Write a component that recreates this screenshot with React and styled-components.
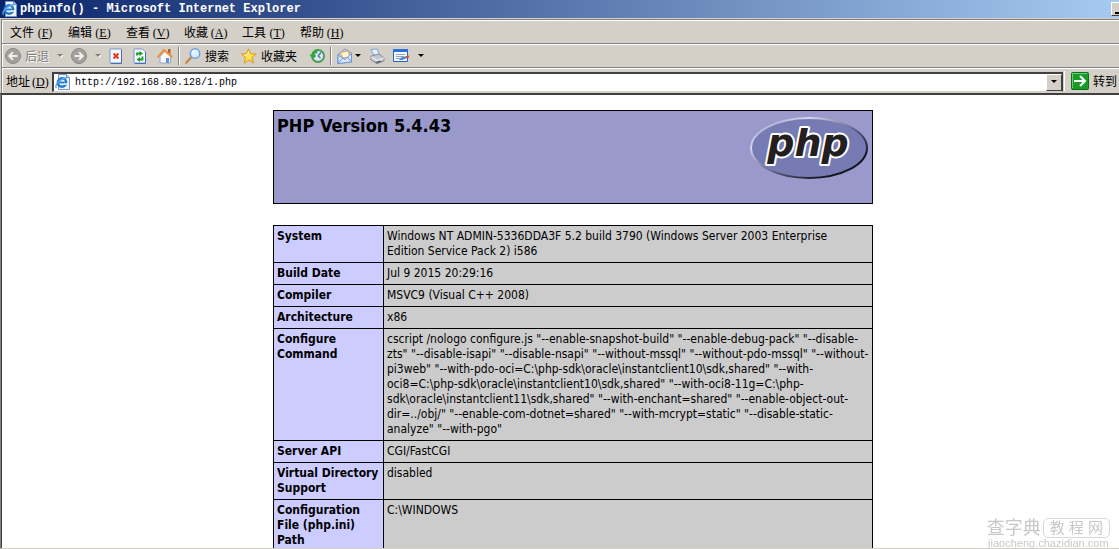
import styled, { createGlobalStyle } from "styled-components";

const GlobalStyle = createGlobalStyle`
  * {
    box-sizing: border-box;
  }

  body {
    margin: 0;
    background-color: #fff;
    color: #000;
    font-family: "Liberation Sans", "Noto Sans CJK SC", sans-serif;
    font-size: 12px;
  }
`;

const Window = styled.div`
  display: flex;
  flex-direction: column;
  height: 100vh;
  overflow: hidden;
`;

const TitleBar = styled.header`
  display: flex;
  align-items: center;
  gap: 2px;
  height: 18px;
  padding-left: 2px;
  flex-shrink: 0;
  background: linear-gradient(to right, #0a246a, #a6caf0);
`;

const Title = styled.h1`
  flex: 1;
  margin: 0;
  color: #fff;
  font-family: "Liberation Mono", monospace;
  font-size: 12px;
  line-height: 18px;
  white-space: nowrap;
`;

const MinimizeButton = styled.button`
  width: 8px;
  height: 14px;
  padding: 0;
  border: 1px solid #fff;
  border-right: none;
  border-bottom-color: #404040;
  background-color: #d4d0c8;
  display: flex;
  align-items: flex-end;
  justify-content: flex-end;

  &::after {
    content: "";
    width: 4px;
    height: 2px;
    margin-bottom: 1px;
    background-color: #000;
  }
`;

const Chrome = styled.div`
  flex-shrink: 0;
  padding-top: 1px;
  padding-left: 1px;
  background-color: #d4d0c8;
`;

const Bar = styled.div`
  display: flex;
  align-items: center;
  height: ${(props) => props.$height}px;
  border-top: 1px solid #808080;
  border-left: 1px solid #808080;
  box-shadow: inset 1px 1px 0 #fff;
  white-space: nowrap;
`;

const MenuBar = styled(Bar)`
  gap: 14px;
  padding-left: 8px;
`;

const AddressBar = styled(Bar)`
  padding-left: 4px;
`;

const PlainButton = styled.button`
  display: flex;
  align-items: center;
  gap: ${(props) => props.$gap || 2}px;
  margin: 0;
  padding: 0;
  border: none;
  background: none;
  color: ${(props) => (props.$muted ? "#808080" : "#000")};
  font-family: "Noto Sans CJK SC", sans-serif;
  font-size: 12px;
  line-height: 18px;
  text-shadow: ${(props) => (props.$muted ? "1px 1px 0 #fff" : "none")};
`;

const Key = styled.span`
  display: inline-block;
  width: 18px;
  margin-left: 2px;
  font-family: "Liberation Serif", serif;
  font-size: 12px;
  line-height: 16px;
`;

const Toolbar = styled(Bar)`
  padding-left: 3px;
  gap: 5px;
`;

const Group = styled.div`
  display: flex;
  align-items: center;
  gap: ${(props) => props.$gap}px;
`;

const Separator = styled.span`
  width: 2px;
  height: 18px;
  border-left: 1px solid #808080;
  border-right: 1px solid #fff;
`;

const AddressLabel = styled.label`
  width: 46px;
  font-family: "Noto Sans CJK SC", sans-serif;
`;

const AddressBox = styled.div`
  flex: 1;
  display: flex;
  align-items: center;
  height: 20px;
  margin-top: 2px;
  padding-left: 1px;
  border: 1px solid #404040;
  border-width: 2px 1px 1px 2px;
  border-bottom-color: #d4d0c8;
  background-color: #fff;
`;

const AddressInput = styled.input`
  flex: 1;
  min-width: 0;
  height: 16px;
  margin-left: 4px;
  padding: 0;
  border: none;
  outline: none;
  background: none;
  font-family: "Liberation Mono", monospace;
  font-size: 10px;
`;

const DropButton = styled.button`
  display: flex;
  align-items: center;
  justify-content: center;
  width: 16px;
  height: 17px;
  padding: 0;
  border: 1px solid #fff;
  border-right-color: #404040;
  border-bottom-color: #404040;
  background-color: #d4d0c8;
`;

const GoButton = styled(PlainButton)`
  height: 20px;
  margin-left: 1px;
  padding-left: 6px;
  padding-right: 2px;
  border-left: 1px solid #fff;
`;

const Viewport = styled.main`
  flex: 1;
  min-height: 0;
  overflow: hidden;
  border-top: 2px solid #404040;
  border-left: 1px solid #808080;
  border-bottom: 1px solid #d4d0c8;
  box-shadow: inset 1px 0 0 #404040;
`;

/* the document is wider than the visible part of the window */
const Page = styled.div`
  width: calc(100% + 26px);
  padding-top: 15px;
  font-family: "DejaVu Sans Condensed", "DejaVu Sans", sans-serif;
  font-size: 12px;
  line-height: 15px;
`;

const Banner = styled.section`
  display: flex;
  justify-content: space-between;
  width: 600px;
  height: 94px;
  margin: 0 auto 21px;
  padding: 4px 3px;
  border: 1px solid #000;
  background-color: #9999cc;
`;

const Version = styled.h2`
  margin: 0;
  font-size: 18px;
  line-height: 22px;
`;

const InfoTable = styled.table`
  width: 600px;
  margin: 0 auto;
  border-collapse: collapse;
  table-layout: fixed;
`;

const Name = styled.th`
  width: 110px;
  padding: 3px;
  border: 1px solid #000;
  background-color: #ccccff;
  text-align: left;
  vertical-align: top;
  white-space: nowrap;
`;

const Value = styled.td`
  padding: 3px;
  border: 1px solid #000;
  background-color: #cccccc;
  vertical-align: top;
  white-space: nowrap;
`;

const Watermark = styled.div`
  position: fixed;
  right: 9px;
  bottom: 0;
  display: flex;
  flex-direction: column;
  align-items: center;
  color: #c8c8c8;
  font-family: "Liberation Sans", "Noto Sans CJK SC", sans-serif;
  font-size: 11px;
  line-height: 11px;
`;

const WatermarkTop = styled.div`
  display: flex;
  align-items: center;
  font-size: 18px;
  line-height: 20px;
`;

const WatermarkTag = styled.span`
  margin-left: 2px;
  padding: 0 6px;
  border: 1px solid #d8d8d8;
  border-radius: 5px;
  font-size: 15px;
  line-height: 18px;
`;

const menus = [
  ["文件", "F"],
  ["编辑", "E"],
  ["查看", "V"],
  ["收藏", "A"],
  ["工具", "T"],
  ["帮助", "H"],
];

const rows = [
  {
    name: ["System"],
    value: [
      "Windows NT ADMIN-5336DDA3F 5.2 build 3790 (Windows Server 2003 Enterprise",
      "Edition Service Pack 2) i586",
    ],
  },
  { name: ["Build Date"], value: ["Jul 9 2015 20:29:16"] },
  { name: ["Compiler"], value: ["MSVC9 (Visual C++ 2008)"] },
  { name: ["Architecture"], value: ["x86"] },
  {
    name: ["Configure", "Command"],
    value: [
      'cscript /nologo configure.js "--enable-snapshot-build" "--enable-debug-pack" "--disable-',
      'zts" "--disable-isapi" "--disable-nsapi" "--without-mssql" "--without-pdo-mssql" "--without-',
      'pi3web" "--with-pdo-oci=C:\\php-sdk\\oracle\\instantclient10\\sdk,shared" "--with-',
      'oci8=C:\\php-sdk\\oracle\\instantclient10\\sdk,shared" "--with-oci8-11g=C:\\php-',
      'sdk\\oracle\\instantclient11\\sdk,shared" "--with-enchant=shared" "--enable-object-out-',
      'dir=../obj/" "--enable-com-dotnet=shared" "--with-mcrypt=static" "--disable-static-',
      'analyze" "--with-pgo"',
    ],
  },
  { name: ["Server API"], value: ["CGI/FastCGI"] },
  { name: ["Virtual Directory", "Support"], value: ["disabled"] },
  { name: ["Configuration", "File (php.ini)", "Path"], value: ["C:\\WINDOWS"] },
];

function Lines({ lines }) {
  return lines.map((line, i) => (
    <span key={line}>
      {i > 0 && <br />}
      {line}
    </span>
  ));
}

function Shortcut({ letter }) {
  return (
    <Key>
      (<u>{letter}</u>)
    </Key>
  );
}

function Caret({ muted }) {
  return (
    <svg width="6" height="4" viewBox="0 0 6 4">
      {muted && <path d="M1 1h6L4 4z" fill="#fff" />}
      <path d="M0 0h6L3 3z" fill={muted ? "#808080" : "#000"} />
    </svg>
  );
}

function PageIcon() {
  return (
    <svg width="16" height="16" viewBox="0 0 16 16">
      <path d="M3.500.5h8l3 3v12h-11z" fill="#eef3fb" stroke="#7a92c4" />
      <path d="M11.500.5v3h3" fill="#c3d3ee" stroke="#7a92c4" />
      <circle cx="7" cy="8.500" r="4.200" fill="none" stroke="#1f78d1" strokeWidth="2.400" />
      <path d="M4 8.500h7" stroke="#1f78d1" strokeWidth="1.800" />
      <path d="M9 10h4" stroke="#eef3fb" strokeWidth="1.600" />
      <path d="M1.500 14C-1 12 4 5 12.500 3.500" fill="none" stroke="#57a8ea" strokeWidth="1.300" />
    </svg>
  );
}

function ArrowCircle({ forward }) {
  return (
    <svg width="16" height="16" viewBox="0 0 16 16">
      <circle cx="8" cy="8" r="7.500" fill="#a3a19c" stroke="#8b8984" />
      <path
        d={forward ? "M3.500 8h8M8 4.200 11.800 8 8 11.800" : "M12.500 8h-8M8 4.200 4.200 8 8 11.800"}
        fill="none"
        stroke="#f0eeea"
        strokeWidth="2"
      />
    </svg>
  );
}

function StopIcon() {
  return (
    <svg width="14" height="16" viewBox="0 0 14 16">
      <path d="M1 1h11.500v14H1z" fill="#f3f8ff" stroke="#7797d0" />
      <path d="M12.500 2v13.500H2" fill="none" stroke="#4a6fb5" />
      <path d="m4.500 5.500 5 5m0-5-5 5" stroke="#e23a1c" strokeWidth="2" />
    </svg>
  );
}

function RefreshIcon() {
  return (
    <svg width="14" height="16" viewBox="0 0 14 16">
      <path d="M1 1h8.500l3 3v11H1z" fill="#f3f8ff" stroke="#7797d0" />
      <path d="M12.500 4v11.500H2" fill="none" stroke="#4a6fb5" />
      <path d="M4 7.500V5.500h3M9.500 8.500v3h-3" fill="none" stroke="#1d9a22" strokeWidth="1.800" />
      <path d="M6.500 3 10 5.500 6.500 8zM7 9l-3.500 2.500L7 14z" fill="#1d9a22" />
    </svg>
  );
}

function HomeIcon() {
  return (
    <svg width="16" height="16" viewBox="0 0 16 16">
      <path d="M11 1h2.500v5H11z" fill="#b55d33" />
      <path d="M3 8.500 8 3l5.500 5.500V15H3z" fill="#f5f8fd" stroke="#94a7cc" />
      <path d="M9 10h3v5H9z" fill="#6d90cf" />
      <path d="M.8 9.200 7 2l8.200 7.200" fill="none" stroke="#ee923d" strokeWidth="2.200" />
    </svg>
  );
}

function SearchIcon() {
  return (
    <svg width="16" height="16" viewBox="0 0 16 16">
      <path d="m1.500 14.500 5-5.500" stroke="#c18a4e" strokeWidth="2.600" strokeLinecap="round" />
      <circle cx="10" cy="5.500" r="4.700" fill="#d8efff" stroke="#6c9fdf" strokeWidth="1.500" />
      <path d="M7.500 5A3 3 0 0 1 10 2.800" fill="none" stroke="#fff" strokeWidth="1.500" />
    </svg>
  );
}

function StarIcon() {
  return (
    <svg width="16" height="16" viewBox="0 0 16 16">
      <path
        d="m7.500.8 2 4.900 5.700.3-4.400 3.500 1.800 5.500L8 12l-4.600 3 1-5.500L.6 6l5-.4z"
        fill="#ffe14d"
        stroke="#d99a16"
      />
      <path d="M7.500 3.500 6.500 7l-3 .2" fill="none" stroke="#fffac0" />
    </svg>
  );
}

function HistoryIcon() {
  return (
    <svg width="16" height="16" viewBox="0 0 16 16">
      <circle cx="9" cy="8" r="6" fill="#dceaf6" stroke="#4b9a58" strokeWidth="1.800" />
      <path d="M9 8l3-3.500M9 8l2.500 2" stroke="#466a9c" strokeWidth="1.200" />
      <path d="M8 5.500H5.500L7 8 4 11 .3 6.800 3 6.500C3.500 3 6 1.500 9 1.500" fill="#2faa3c" />
    </svg>
  );
}

function MailIcon() {
  return (
    <svg width="16" height="16" viewBox="0 0 16 16">
      <path d="M1 6.500 8 1l6.500 4v9L1 15.500z" fill="#b8d2f5" stroke="#7095d3" />
      <path d="m3.500 4.500 8-1.500 1 6-7 1z" fill="#fff4d6" stroke="#e4a657" />
      <path d="M1 7l7 4.500 6.500-6V14L1 15.500z" fill="#d6e6fb" stroke="#7095d3" />
      <path d="m1 15 5-5m8.500 4-4-5" stroke="#7095d3" />
    </svg>
  );
}

function PrintIcon() {
  return (
    <svg width="16" height="16" viewBox="0 0 16 16">
      <path d="M2 1.500 8 1l2.500 6H5z" fill="#e7f2ff" stroke="#80a4d6" />
      <path d="m2 8 8-2 5 4v3l-7 2.500L2 12z" fill="#c5c8ce" stroke="#858b96" />
      <path d="m2 9 6 3.500 7-2.500" fill="none" stroke="#f8f8f8" />
      <path d="m6 14 5-1.500 2 1L8 15.500z" fill="#646b78" />
    </svg>
  );
}

function EditIcon() {
  return (
    <svg width="17" height="16" viewBox="0 0 17 16">
      <path d="M.5 1.500h14v12H.5z" fill="#f8fbff" stroke="#2763c4" />
      <path d="M0 1h15v3H0z" fill="#2a70dc" />
      <path d="M3 6.500h9M3 8.500h8M3 10.500h4" stroke="#8da5c9" />
      <path d="m6 12 2-2.500 6-1.500v2l-5 2z" fill="#5284c3" />
      <path d="m13 8 3-.500v2l-3 .500z" fill="#d84c28" />
    </svg>
  );
}

function GoIcon() {
  return (
    <svg width="18" height="18" viewBox="0 0 18 18">
      <rect x=".5" y=".5" width="17" height="17" rx="1" fill="#189b27" stroke="#0a7018" />
      <path d="M1.500 16V1.500H16" fill="none" stroke="#71c878" />
      <path d="M3 9h11M9 4l5 5-5 5" fill="none" stroke="#fff" strokeWidth="2" />
    </svg>
  );
}

function PhpLogo() {
  const word = {
    x: 59,
    y: 41,
    textAnchor: "middle",
    fontFamily: "DejaVu Sans, sans-serif",
    fontSize: 38,
    fontWeight: "bold",
    fontStyle: "italic",
    strokeLinejoin: "round",
  };

  return (
    <svg width="120" height="67" viewBox="0 0 120 67" role="img" aria-label="PHP logo">
      <defs>
        <linearGradient id="rim" x1="0" y1="0" x2="1" y2="1">
          <stop offset="0" stopColor="#8a8cc0" />
          <stop offset="0.25" stopColor="#d5d7ec" />
          <stop offset="0.55" stopColor="#5c5e86" />
          <stop offset="0.8" stopColor="#15151f" />
          <stop offset="1" stopColor="#15151f" />
        </linearGradient>
      </defs>
      <ellipse cx="60" cy="33" rx="58" ry="30" fill="#777bb3" stroke="url(#rim)" strokeWidth="2" />
      <text {...word} fill="#231f20" stroke="#fff" strokeWidth="4" paintOrder="stroke">
        php
      </text>
    </svg>
  );
}

function BrowserToolbar() {
  return (
    <Toolbar $height={24}>
      <Group $gap={8}>
        <PlainButton $muted $gap={4} disabled>
          <ArrowCircle />
          后退
        </PlainButton>
        <PlainButton disabled aria-label="后退列表">
          <Caret muted />
        </PlainButton>
        <PlainButton $gap={8} disabled aria-label="前进">
          <ArrowCircle forward />
          <Caret muted />
        </PlainButton>
        <Group $gap={10}>
          <PlainButton aria-label="停止">
            <StopIcon />
          </PlainButton>
          <PlainButton aria-label="刷新">
            <RefreshIcon />
          </PlainButton>
          <PlainButton aria-label="主页">
            <HomeIcon />
          </PlainButton>
        </Group>
      </Group>
      <Separator />
      <Group $gap={12}>
        <PlainButton $gap={4}>
          <SearchIcon />
          搜索
        </PlainButton>
        <PlainButton $gap={4}>
          <StarIcon />
          收藏夹
        </PlainButton>
        <PlainButton aria-label="历史">
          <HistoryIcon />
        </PlainButton>
      </Group>
      <Separator />
      <Group $gap={8}>
        <PlainButton aria-label="邮件">
          <MailIcon />
          <Caret />
        </PlainButton>
        <PlainButton aria-label="打印">
          <PrintIcon />
        </PlainButton>
        <PlainButton $gap={8} aria-label="编辑">
          <EditIcon />
          <Caret />
        </PlainButton>
      </Group>
    </Toolbar>
  );
}

function App() {
  return (
    <Window>
      <GlobalStyle />
      <TitleBar>
        <PageIcon />
        <Title>phpinfo() - Microsoft Internet Explorer</Title>
        <MinimizeButton aria-label="最小化" />
      </TitleBar>
      <Chrome>
        <MenuBar as="nav" $height={24}>
          {menus.map(([label, letter]) => (
            <PlainButton key={letter}>
              <span>
                {label}
                <Shortcut letter={letter} />
              </span>
            </PlainButton>
          ))}
        </MenuBar>
        <BrowserToolbar />
        <AddressBar $height={26}>
          <AddressLabel htmlFor="address">
            地址
            <Shortcut letter="D" />
          </AddressLabel>
          <AddressBox>
            <PageIcon />
            <AddressInput id="address" defaultValue="http://192.168.80.128/1.php" />
            <DropButton aria-label="地址列表">
              <Caret />
            </DropButton>
          </AddressBox>
          <GoButton $gap={4}>
            <GoIcon />
            转到
          </GoButton>
        </AddressBar>
      </Chrome>
      <Viewport>
        <Page>
          <Banner>
            <Version>PHP Version 5.4.43</Version>
            <PhpLogo />
          </Banner>
          <InfoTable>
            <tbody>
              {rows.map((row) => (
                <tr key={row.name[0]}>
                  <Name scope="row">
                    <Lines lines={row.name} />
                  </Name>
                  <Value>
                    <Lines lines={row.value} />
                  </Value>
                </tr>
              ))}
            </tbody>
          </InfoTable>
        </Page>
      </Viewport>
      <Watermark>
        <WatermarkTop>
          查字典
          <WatermarkTag>教 程 网</WatermarkTag>
        </WatermarkTop>
        jiaocheng.chazidian.com
      </Watermark>
    </Window>
  );
}

export default App;
